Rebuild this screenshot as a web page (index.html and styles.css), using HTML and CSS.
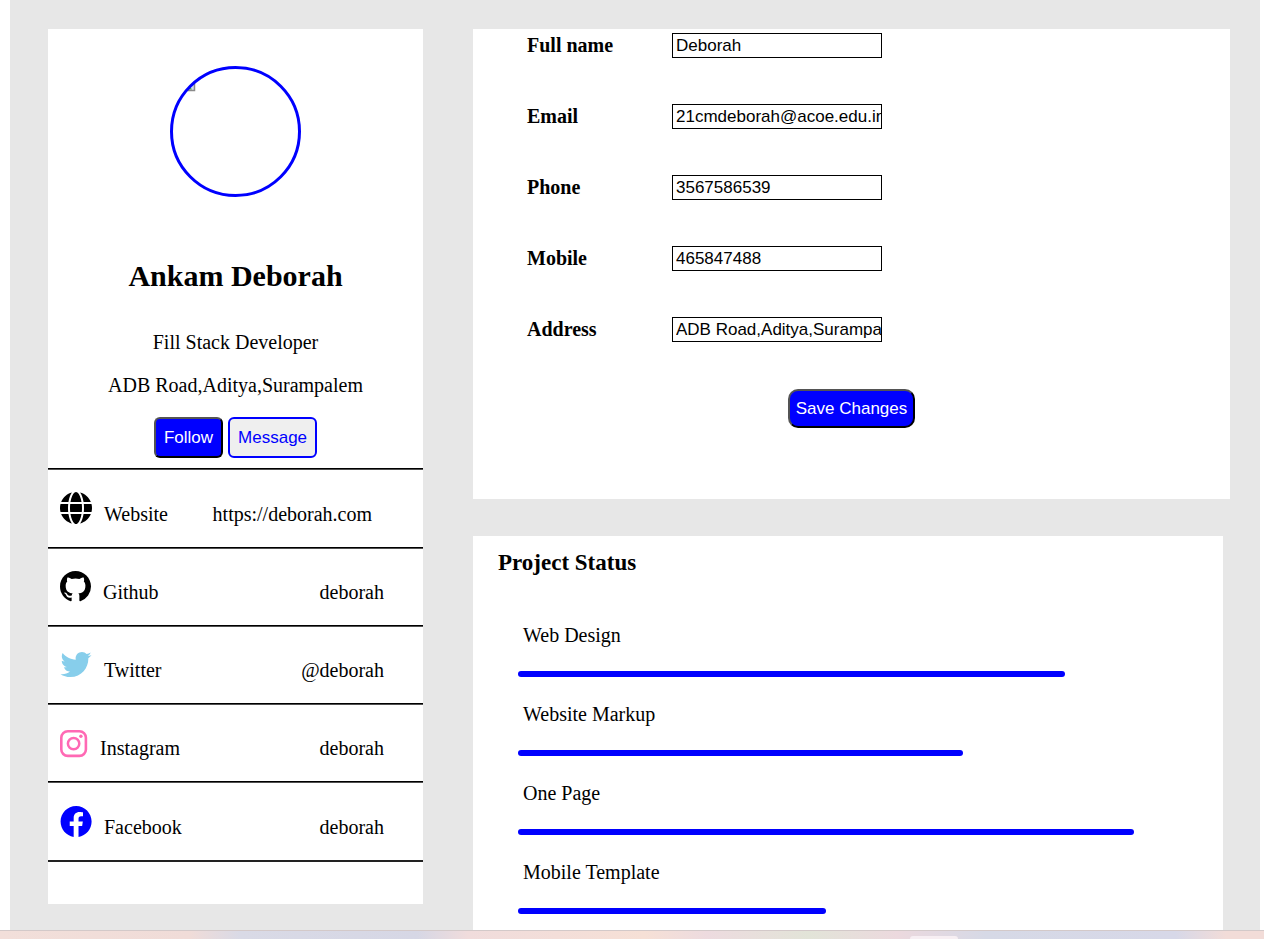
FILE: index.html
```html
<!DOCTYPE html>
<html lang="en">
<head>
<meta charset="utf-8">
<title>Profile</title>
<link rel="stylesheet" href="styles.css">
</head>
<body>
<main class="page">
  <section class="card profile">
    <svg class="avatar" viewBox="0 0 131 131" role="img" aria-label="Profile photo">
      <path d="M13 24.500H24.500V13" fill="#cfdcf0" stroke="#8a8a8a" stroke-width="1.500"/>
      <path d="M16 23.500l4-3 2 3z" fill="#57a845"/>
      <path d="M0 0H65.500V1.500A64 64 0 0 0 1.500 65.500H0z" fill="#fff"/>
      <circle cx="65.500" cy="65.500" r="64" fill="none" stroke="#00f" stroke-width="3"/>
    </svg>
    <h1 class="name">Ankam Deborah</h1>
    <p class="role">Fill Stack Developer</p>
    <p class="place">ADB Road,Aditya,Surampalem</p>
    <div class="actions">
      <button class="btn btn-primary" type="button">Follow</button>
      <button class="btn btn-outline" type="button">Message</button>
    </div>
    <ul class="links">
      <li class="link-row link-row-url">
        <svg class="icon" width="32" height="32" viewBox="0 0 512 512"><path d="M352 256c0 22.200-1.200 43.600-3.300 64H163.300c-2.200-20.400-3.300-41.800-3.300-64s1.200-43.600 3.300-64h185.400c2.200 20.400 3.300 41.800 3.300 64zm28.800-64h123.100c5.300 20.500 8.100 41.900 8.100 64s-2.800 43.500-8.100 64H380.800c2.100-20.600 3.200-42 3.200-64s-1.100-43.400-3.200-64zm112.600-32H376.700c-10-63.900-29.800-117.400-55.300-151.600 78.300 20.700 142 77.500 171.900 151.600zm-149.100 0H167.700c6.100-36.400 15.500-68.600 27-94.700 10.500-23.600 22.200-40.700 33.500-51.500C239.400 3.200 248.700 0 256 0s16.600 3.200 27.800 13.800c11.300 10.800 23 27.900 33.500 51.500 11.600 26 20.900 58.200 27 94.700zm-209 0H18.600C48.600 85.900 112.200 29.100 190.600 8.400 165.100 42.600 145.300 96.100 135.300 160zM8.100 192h123.100c-2.100 20.600-3.200 42-3.200 64s1.100 43.400 3.200 64H8.100C2.800 299.500 0 278.100 0 256s2.800-43.500 8.100-64zm186.600 254.600c-11.600-26-20.900-58.200-27-94.600h176.600c-6.100 36.400-15.500 68.600-27 94.600-10.500 23.600-22.200 40.700-33.500 51.500C272.600 508.800 263.300 512 256 512s-16.600-3.200-27.800-13.800c-11.300-10.800-23-27.900-33.500-51.600zM135.300 352c10 63.900 29.800 117.400 55.300 151.600C112.200 482.900 48.600 426.100 18.600 352h116.700zm358.100 0c-30 74.100-93.600 130.900-171.900 151.600 25.500-34.200 45.200-87.700 55.300-151.600h116.600z"/></svg>
        <span class="link-name">Website</span>
        <span>https://deborah.com</span>
      </li>
      <li class="link-row">
        <svg class="icon" width="31" height="31" viewBox="0 0 16 16"><path d="M8 0C3.580 0 0 3.580 0 8c0 3.540 2.290 6.530 5.470 7.590.4.070.55-.17.55-.38 0-.19-.01-.82-.01-1.490-2.010.37-2.530-.49-2.690-.94-.09-.23-.48-.94-.82-1.130-.28-.15-.68-.52-.01-.53.63-.01 1.080.58 1.230.82.72 1.210 1.870.87 2.330.66.070-.52.28-.87.51-1.070-1.780-.2-3.640-.89-3.640-3.950 0-.87.31-1.590.82-2.150-.08-.2-.36-1.020.080-2.120 0 0 .67-.21 2.200.82.64-.18 1.320-.27 2-.27s1.360.09 2 .27c1.530-1.040 2.200-.82 2.200-.82.44 1.100.16 1.920.080 2.120.51.56.82 1.270.82 2.150 0 3.070-1.870 3.750-3.650 3.950.29.25.54.73.54 1.480 0 1.070-.01 1.930-.01 2.200 0 .21.15.46.55.38A8.010 8.010 0 0 0 16 8c0-4.420-3.580-8-8-8z"/></svg>
        <span class="link-name">Github</span>
        <span>deborah</span>
      </li>
      <li class="link-row">
        <svg class="icon icon-twitter" width="32" height="31" viewBox="0 0 512 512"><path d="M459.370 151.716c.325 4.548.325 9.097.325 13.645 0 138.720-105.583 298.558-298.558 298.558-59.452 0-114.680-17.219-161.137-47.106 8.447.974 16.568 1.299 25.340 1.299 49.055 0 94.213-16.568 130.274-44.832-46.132-.975-84.792-31.188-98.112-72.772 6.498.974 12.995 1.624 19.818 1.624 9.421 0 18.843-1.300 27.614-3.573-48.081-9.747-84.143-51.980-84.143-102.985v-1.299c13.969 7.797 30.214 12.670 47.431 13.319-28.264-18.843-46.781-51.005-46.781-87.391 0-19.492 5.197-37.360 14.294-52.954 51.655 63.675 129.300 105.258 216.365 109.807-1.624-7.797-2.599-15.918-2.599-24.040 0-57.828 46.782-104.934 104.934-104.934 30.213 0 57.502 12.670 76.670 33.137 23.715-4.548 46.456-13.320 66.599-25.340-7.798 24.366-24.366 44.833-46.132 57.827 21.117-2.273 41.584-8.122 60.426-16.243-14.292 20.791-32.161 39.308-52.628 54.253z"/></svg>
        <span class="link-name">Twitter</span>
        <span>@deborah</span>
      </li>
      <li class="link-row">
        <svg class="icon icon-instagram" width="28" height="31" viewBox="0 0 28 31"><rect x="1.300" y="4.300" width="24.600" height="24.600" rx="6.500" fill="none" stroke="currentColor" stroke-width="2.600"/><circle cx="13.600" cy="16.600" r="5.700" fill="none" stroke="currentColor" stroke-width="2.500"/><circle cx="20.900" cy="9.300" r="1.700"/></svg>
        <span class="link-name">Instagram</span>
        <span>deborah</span>
      </li>
      <li class="link-row">
        <svg class="icon icon-facebook" width="32" height="32" viewBox="-0.300 -0.500 16.500 16.500"><path d="M16 8.049c0-4.446-3.582-8.050-8-8.050C3.580 0-.002 3.603-.002 8.050c0 4.017 2.926 7.347 6.750 7.951v-5.625h-2.030V8.050H6.750V6.275c0-2.017 1.195-3.131 3.022-3.131.876 0 1.791.157 1.791.157v1.980h-1.009c-.993 0-1.303.621-1.303 1.258v1.510h2.218l-.354 2.326H9.250V16c3.824-.604 6.750-3.934 6.750-7.951z"/></svg>
        <span class="link-name">Facebook</span>
        <span>deborah</span>
      </li>
    </ul>
  </section>

  <div class="details">
    <form class="card info">
      <div class="field"><label for="fullname">Full name</label><input id="fullname" type="text" value="Deborah"></div>
      <div class="field"><label for="email">Email</label><input id="email" type="text" value="21cmdeborah@acoe.edu.in"></div>
      <div class="field"><label for="phone">Phone</label><input id="phone" type="text" value="3567586539"></div>
      <div class="field"><label for="mobile">Mobile</label><input id="mobile" type="text" value="465847488"></div>
      <div class="field"><label for="address">Address</label><input id="address" type="text" value="ADB Road,Aditya,Surampalem"></div>
      <button class="btn btn-primary btn-save" type="button">Save Changes</button>
    </form>

    <section class="card status">
      <h2 class="status-title">Project Status</h2>
      <div class="skill"><p class="skill-name">Web Design</p><div class="bar" style="width:80%"></div></div>
      <div class="skill"><p class="skill-name">Website Markup</p><div class="bar" style="width:65%"></div></div>
      <div class="skill"><p class="skill-name">One Page</p><div class="bar" style="width:90%"></div></div>
      <div class="skill"><p class="skill-name">Mobile Template</p><div class="bar" style="width:45%"></div></div>
    </section>
  </div>
</main>
<footer class="taskbar"><div class="taskbar-tab"></div></footer>
</body>
</html>
```

FILE: styles.css
```css
* {
  box-sizing: border-box;
}

body {
  margin: 0;
  height: 100vh;
  display: flex;
  flex-direction: column;
  overflow: hidden;
  background: #fff;
  color: #000;
  font: 20px/23px "Liberation Serif", "Times New Roman", serif;
}

h1, h2, p, ul {
  margin: 0;
  padding: 0;
}

.page {
  flex: 1;
  min-height: 0;
  overflow: hidden;
  display: grid;
  grid-template-columns: minmax(0, 375fr) minmax(0, 757fr);
  column-gap: 50px;
  margin: 0 4px 0 10px;
  padding: 29px 30px 0 38px;
  background: #e7e7e7;
}

.card {
  background: #fff;
}

.profile {
  align-self: start;
  display: flex;
  flex-direction: column;
  align-items: center;
  padding: 37px 0 42px;
}

.avatar {
  width: 131px;
  height: 131px;
}

.name {
  margin-top: 62px;
  font-size: 30px;
  line-height: 34px;
}

.role {
  margin-top: 38px;
}

.place {
  margin-top: 20px;
}

.actions {
  display: flex;
  gap: 5px;
  margin: 20px 0 10px;
}

.btn {
  padding: 9px 8px;
  border: 2px solid #00f;
  border-radius: 6px;
  font: 17px/19px "Liberation Sans", Arial, sans-serif;
}

.btn-primary {
  border: 2px outset #000;
  background: #00f;
  color: #fff;
}

.btn-outline {
  background: #efefef;
  color: #00f;
}

.links {
  align-self: stretch;
  list-style: none;
  border-bottom: 2px solid #222;
}

.link-row {
  display: flex;
  align-items: flex-end;
  padding: 23px 39px 21px 12px;
  border-top: 1px solid #000;
  box-shadow: inset 0 1px 0 #505050;
}

.link-row-url {
  padding-right: 51px;
}

.icon {
  flex: none;
  margin: 0 12px 2px 0;
  fill: currentColor;
}

.icon-twitter {
  color: #87ceeb;
}

.icon-instagram {
  color: #ff69b4;
}

.icon-facebook {
  color: #00f;
}

.link-name {
  flex: 1;
}

.details {
  display: flex;
  flex-direction: column;
  gap: 37px;
}

.info {
  display: flex;
  flex-direction: column;
  gap: 46px;
  padding: 4px 54px 71px;
}

.field {
  display: flex;
  align-items: center;
}

.field label {
  flex: 0 0 145px;
  font-weight: bold;
}

.field input {
  width: 210px;
  height: 25px;
  padding: 1px 0 1px 3px;
  border: 1px solid #000;
  background: #fff;
  color: #000;
  font: 17px/19px "Liberation Sans", Arial, sans-serif;
}

.btn-save {
  align-self: center;
  margin-top: 1px;
  padding: 8px 6px;
  border-radius: 10px;
}

.status {
  flex: 1;
  margin-right: 7px;
  padding: 14px 21px 0 45px;
}

.status-title {
  margin: 0 0 48px -20px;
  font-size: 23px;
  line-height: 26px;
}

.skill {
  margin-bottom: 26px;
}

.skill-name {
  padding-left: 5px;
  margin-bottom: 24px;
}

.bar {
  height: 6px;
  border-radius: 3px;
  background: #00f;
}

.taskbar {
  flex: none;
  height: 9px;
  padding: 5px 0 0 72%;
  border-top: 1px solid #d3c9c9;
  background: linear-gradient(90deg, #f2dfda 0, #f0dcd8 15%, #d9dae6 19%, #d6d7e5 33%, #f0dcdc 37%, #f6e0d6 51%, #eddbdf 56%, #e2e4d8 64%, #ecd9de 71%, #d6d9e6 78%, #d7d8e8 93%, #f2dcd8 97%);
}

.taskbar-tab {
  width: 48px;
  height: 3px;
  border-radius: 3px 3px 0 0;
  background: #f7eff3;
}
```
